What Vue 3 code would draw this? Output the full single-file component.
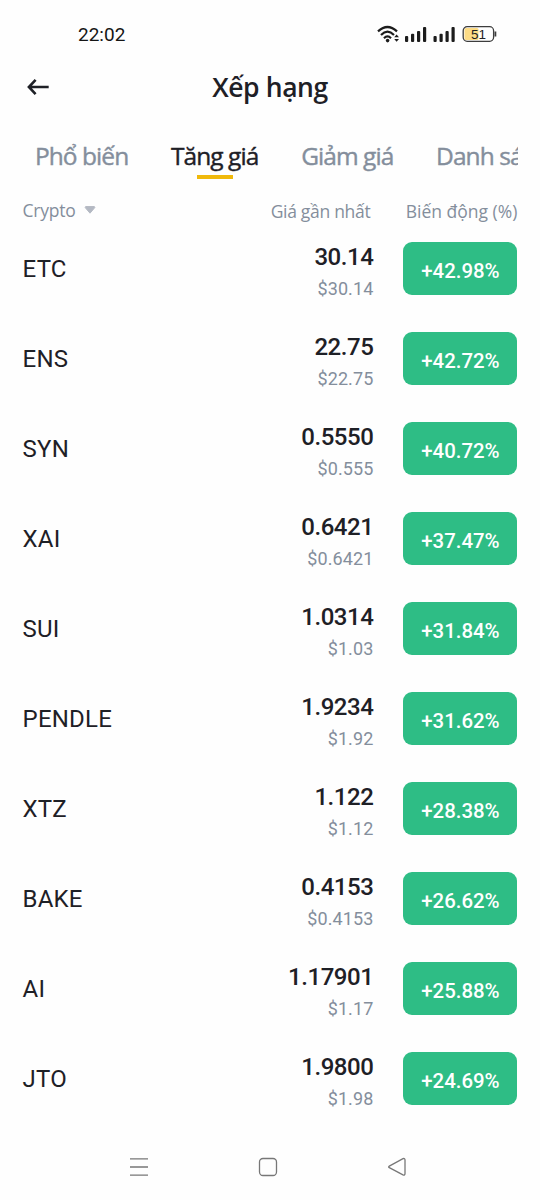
<script setup>
const tabs = [
  { label: 'Phổ biến' },
  { label: 'Tăng giá', active: true },
  { label: 'Giảm giá' },
  { label: 'Danh sách' },
]

const coins = [
  { symbol: 'ETC', price: '30.14', usd: '$30.14', change: '+42.98%' },
  { symbol: 'ENS', price: '22.75', usd: '$22.75', change: '+42.72%' },
  { symbol: 'SYN', price: '0.5550', usd: '$0.555', change: '+40.72%' },
  { symbol: 'XAI', price: '0.6421', usd: '$0.6421', change: '+37.47%' },
  { symbol: 'SUI', price: '1.0314', usd: '$1.03', change: '+31.84%' },
  { symbol: 'PENDLE', price: '1.9234', usd: '$1.92', change: '+31.62%' },
  { symbol: 'XTZ', price: '1.122', usd: '$1.12', change: '+28.38%' },
  { symbol: 'BAKE', price: '0.4153', usd: '$0.4153', change: '+26.62%' },
  { symbol: 'AI', price: '1.17901', usd: '$1.17', change: '+25.88%' },
  { symbol: 'JTO', price: '1.9800', usd: '$1.98', change: '+24.69%' },
]
</script>

<template>
  <div class="screen">
    <div class="status">
      <span class="clock">22:02</span>
      <svg class="indicators" width="120" height="20" viewBox="0 0 120 20">
        <g fill="none" stroke="#1c1c1c" stroke-width="2.2" stroke-linecap="butt">
          <path d="M1 6.4 Q10.5 -2.4 20 6.4" />
          <path d="M4 10 Q10.5 3.4 17 10" />
          <path d="M7 13.2 Q10.5 9.6 14 13.2" />
        </g>
        <circle cx="10.6" cy="15.6" r="1.8" fill="#1c1c1c" />
        <path d="M17.2 12.3 L19.6 9.6 L22 12.3 Z M17.2 14 L19.6 16.8 L22 14 Z" fill="#1c1c1c" />
        <g fill="#1c1c1c">
          <rect x="28" y="11" width="3.2" height="6" rx="1" />
          <rect x="34" y="8.7" width="3.2" height="8.3" rx="1" />
          <rect x="40" y="6" width="3.2" height="11" rx="1" />
          <rect x="46" y="2" width="3.2" height="15" rx="1" />
          <rect x="56.5" y="11" width="3.2" height="6" rx="1" />
          <rect x="62.5" y="8.7" width="3.2" height="8.3" rx="1" />
          <rect x="68.5" y="6" width="3.2" height="11" rx="1" />
          <rect x="74.5" y="2" width="3.2" height="15" rx="1" />
        </g>
        <rect x="87.5" y="3" width="14" height="12" rx="1.5" fill="#fddc86" />
        <rect x="86.2" y="1.7" width="30.4" height="14.6" rx="4" fill="none" stroke="#3d3d3d" stroke-width="1.3" />
        <path d="M118.4 6.5 V11.5" stroke="#3d3d3d" stroke-width="1.8" />
        <text class="battery" x="101.5" y="13.6" text-anchor="middle">51</text>
      </svg>
    </div>

    <header class="bar">
      <svg class="back" width="24" height="20" viewBox="0 0 24 20">
        <path d="M9.6 2.8 L2.9 10 L9.6 17.2 M2.9 10 H22.7" fill="none" stroke="#1e2026" stroke-width="2.6" />
      </svg>
      <h1 class="title">Xếp hạng</h1>
    </header>

    <nav class="tabs">
      <span v-for="t in tabs" :key="t.label" class="tab" :class="{ active: t.active }">{{ t.label }}</span>
    </nav>

    <div class="columns">
      <span class="col-name">Crypto
        <svg width="12" height="8" viewBox="0 0 12 8"><path d="M1.6 .6 H10.4 L10.8 1.6 L6 7.2 L1.2 1.6 Z" fill="#b4b9c3" stroke="#b4b9c3" stroke-linejoin="round" /></svg>
      </span>
      <span class="col-price">Giá gần nhất</span>
      <span class="col-change">Biến động (%)</span>
    </div>

    <main class="list">
      <div v-for="c in coins" :key="c.symbol" class="row">
        <span class="symbol">{{ c.symbol }}</span>
        <div class="quote">
          <span class="price">{{ c.price }}</span>
          <span class="usd">{{ c.usd }}</span>
        </div>
        <span class="change">{{ c.change }}</span>
      </div>
    </main>

    <footer class="nav">
      <svg width="20" height="20" viewBox="0 0 20 20"><path d="M1 1.8 H19 M1 10 H19 M1 18.2 H19" /></svg>
      <svg width="20" height="20" viewBox="0 0 20 20"><rect x="1.5" y="1.5" width="17" height="17" rx="3.5" /></svg>
      <svg width="20" height="20" viewBox="0 0 20 20"><path d="M2.3 9.1 L16 1.7 Q18 1 18 3 V16.6 Q18 18.6 16 17.8 L2.3 10.7 Q1 9.9 2.3 9.1 Z" /></svg>
    </footer>
  </div>
</template>

<style>
body { background: #fefefe; }
</style>

<style scoped>
.screen {
  display: flex;
  flex-direction: column;
  width: 540px;
  height: 1200px;
  overflow: hidden;
  background: #fefefe;
  color: #1e2026;
  font-family: Roboto, "Liberation Sans", sans-serif;
}
.status {
  display: flex;
  align-items: center;
  justify-content: space-between;
  height: 60px;
  padding: 10px 43px 0 78px;
  box-sizing: border-box;
}
.clock { font-size: 19px; line-height: 24px; color: #151515; }
.indicators { display: block; }
.battery { font: 13.5px "Liberation Sans", sans-serif; fill: #222; }
.bar {
  display: grid;
  grid-template-columns: 1fr auto 1fr;
  align-items: center;
  height: 54px;
  padding: 0 26px;
}
.title {
  margin: 0;
  font: 600 26.5px/36px "Open Sans", sans-serif;
  letter-spacing: -0.4px;
}
.tabs {
  display: flex;
  gap: 42.8px;
  height: 66px;
  margin-right: 22px;
  padding: 24px 0 0 35px;
  box-sizing: border-box;
  overflow: hidden;
  white-space: nowrap;
}
.tab {
  display: flex;
  flex-direction: column;
  align-items: center;
  flex: none;
  font: 500 24.5px/36px "Open Sans", sans-serif;
  letter-spacing: -0.95px;
  -webkit-text-stroke: 0.4px currentColor;
  color: #848e9c;
}
.active { color: #1e2026; }
.active::after { content: ""; width: 36px; height: 4px; margin-top: 1px; background: #f0b90b; }
.columns {
  display: grid;
  grid-template-columns: 1fr auto 147px;
  align-items: center;
  height: 44px;
  padding: 17px 22.6px 0;
  box-sizing: border-box;
  font: 17.5px/24px "Open Sans", sans-serif;
  letter-spacing: -0.25px;
  color: #848e9c;
}
.col-name { display: flex; align-items: center; gap: 8px; margin-top: -1px; }
.col-price { letter-spacing: -0.3px; }
.col-change { text-align: right; letter-spacing: 0; }
.row {
  display: grid;
  grid-template-columns: 1fr auto 114px;
  column-gap: 30px;
  height: 90px;
  padding: 18.4px 22.6px 0 22.6px;
  box-sizing: border-box;
}
.symbol { font-size: 24px; line-height: 54px; font-weight: 450; letter-spacing: 0.2px; }
.quote { display: flex; flex-direction: column; text-align: right; }
.price { font-size: 24px; font-weight: 500; line-height: 30px; letter-spacing: -0.45px; }
.usd { font-size: 18px; line-height: 22px; margin-top: 6px; color: #848e9c; font-weight: 400; letter-spacing: 0.1px; }
.change {
  height: 52.5px;
  border-radius: 9px;
  background: #2ebd85;
  color: #fff;
  font-size: 20.4px;
  font-weight: 500;
  line-height: 58px;
  text-align: center;
}
.nav {
  display: flex;
  justify-content: center;
  gap: 109px;
  margin: 33px 4px 0 0;
}
.nav svg { flex: none; fill: none; stroke: #777; stroke-width: 1.3; }
</style>
